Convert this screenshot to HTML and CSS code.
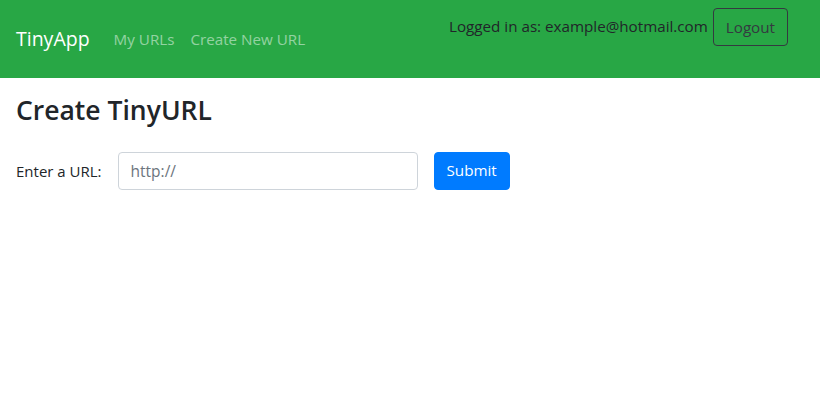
FILE: index.html
```html
<!DOCTYPE html>
<html lang="en">
<head>
<meta charset="utf-8">
<title>TinyApp</title>
<link rel="stylesheet" href="styles.css">
</head>
<body>
<nav class="navbar">
  <a class="brand" href="#">TinyApp</a>
  <div class="nav-links">
    <a class="nav-link" href="#">My URLs</a>
    <a class="nav-link" href="#">Create New URL</a>
  </div>
  <div class="nav-right">
    <span class="user">Logged in as: example@hotmail.com</span>
    <button class="btn btn-outline-dark" type="button">Logout</button>
  </div>
</nav>
<main class="content">
  <h3 class="title">Create TinyURL</h3>
  <form class="url-form">
    <label class="label" for="url">Enter a URL:</label>
    <input class="input" id="url" type="text" placeholder="http://">
    <button class="btn btn-primary" type="submit">Submit</button>
  </form>
</main>
</body>
</html>
```
FILE: styles.css
```css
* { box-sizing: border-box; }
body {
  margin: 0;
  font-family: "Open Sans", "Noto Sans", Arial, sans-serif;
  font-size: 16px;
  line-height: 1.5;
  color: #212529;
  background: #fff;
}
.navbar {
  display: flex;
  align-items: center;
  height: 78px;
  padding: 0 16px;
  background: #28a745;
}
.brand {
  font-size: 19.5px;
  color: #fff;
  text-decoration: none;
  margin-right: 16px;
}
.nav-links { display: flex; }
.nav-link {
  font-size: 15.2px;
  color: rgba(255,255,255,.5);
  text-decoration: none;
  padding: 0 8px;
}
.nav-right {
  margin-left: auto;
  align-self: flex-start;
  display: flex;
  align-items: center;
  padding-top: 8px;
  padding-right: 16px;
  gap: 5px;
}
.user { color: #212529; font-size: 15.2px; margin-top: -2px; }
.btn {
  font: inherit;
  font-size: 15.2px;
  line-height: 1.5;
  height: 38px;
  padding: 0 12px;
  border-radius: 4px;
  border: 1px solid transparent;
  cursor: pointer;
}
.btn-outline-dark {
  background: transparent;
  color: #343a40;
  border-color: #343a40;
}
.btn-primary {
  background: #007bff;
  color: #fff;
  border-color: #007bff;
}
.content { padding: 0 16px; }
.title {
  margin: 17px 0 16px;
  font-size: 26.5px;
  font-weight: 600;
  line-height: 1.2;
}
.url-form {
  display: flex;
  align-items: center;
  gap: 16px;
  margin-top: 25px;
}
.label { font-size: 15px; }
.input {
  width: 300px;
  height: 38px;
  padding: 6px 12px;
  font: inherit;
  font-size: 15.5px;
  color: #495057;
  border: 1px solid #ced4da;
  border-radius: 4px;
}
.input::placeholder { color: #6c757d; }
```
